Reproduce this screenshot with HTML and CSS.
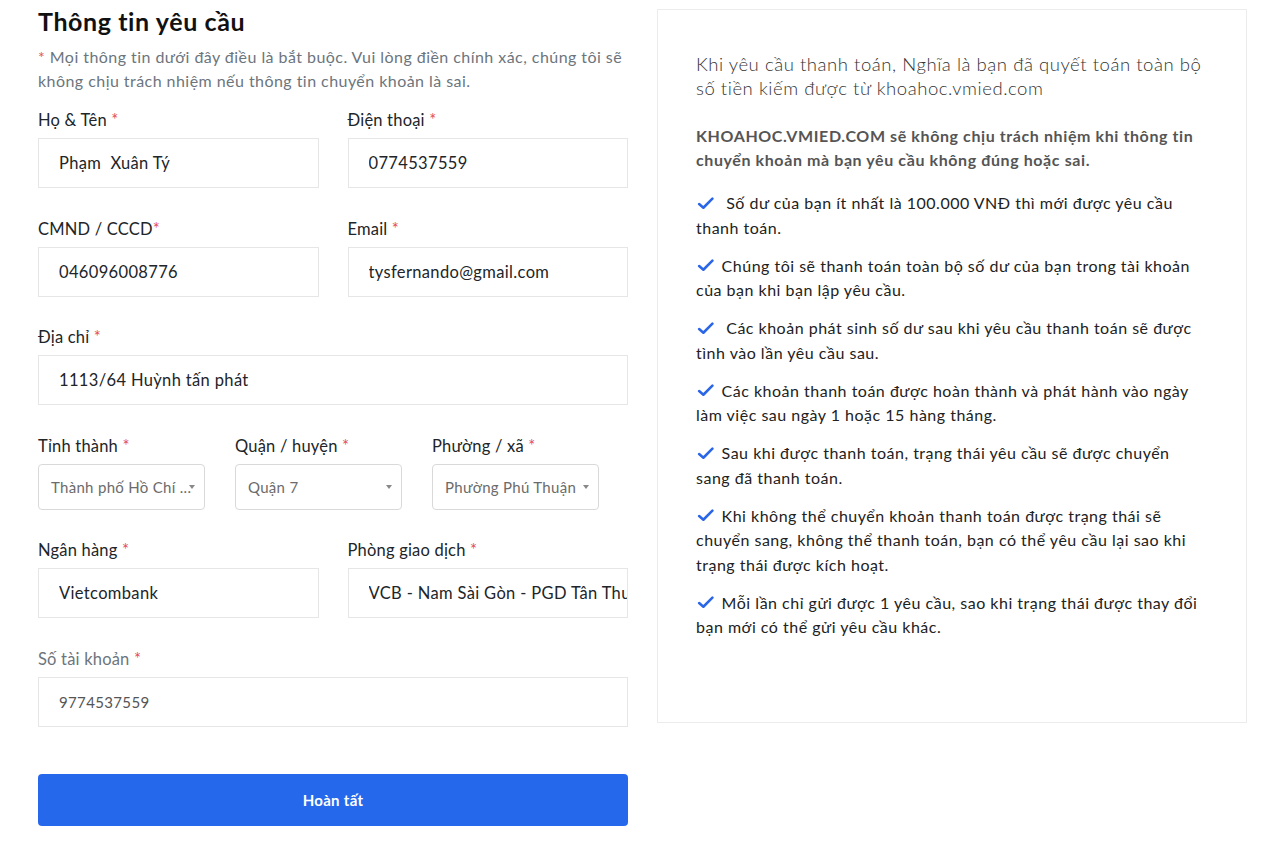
FILE: index.html
```html
<!DOCTYPE html>
<html lang="vi">

<head>
    <meta charset="UTF-8">
    <title>Thông tin yêu cầu</title>
    <link rel="stylesheet" href="styles.css">
</head>

<body>
    <div class="page">

        <form class="request-form">
            <h2 class="title">Thông tin yêu cầu</h2>
            <p class="note"><span class="req">*</span> Mọi thông tin dưới đây điều là bắt buộc. Vui lòng điền chính xác, chúng tôi sẽ không chịu trách nhiệm nếu thông tin chuyển khoản là sai.</p>

            <div class="row two">
                <div class="field">
                    <label>Họ &amp; Tên <span class="req">*</span></label>
                    <input type="text" value="Phạm  Xuân Tý">
                </div>
                <div class="field">
                    <label>Điện thoại <span class="req">*</span></label>
                    <input type="text" value="0774537559">
                </div>
            </div>

            <div class="row two tight">
                <div class="field">
                    <label>CMND / CCCD<span class="req">*</span></label>
                    <input type="text" value="046096008776">
                </div>
                <div class="field">
                    <label>Email <span class="req">*</span></label>
                    <input type="text" value="tysfernando@gmail.com">
                </div>
            </div>

            <div class="field">
                <label>Địa chỉ <span class="req">*</span></label>
                <input type="text" value="1113/64 Huỳnh tấn phát">
            </div>

            <div class="row three">
                <div class="field">
                    <label>Tỉnh thành <span class="req">*</span></label>
                    <div class="select">Thành phố Hồ Chí ...</div>
                </div>
                <div class="field">
                    <label>Quận / huyện <span class="req">*</span></label>
                    <div class="select">Quận 7</div>
                </div>
                <div class="field">
                    <label>Phường / xã <span class="req">*</span></label>
                    <div class="select">Phường Phú Thuận</div>
                </div>
            </div>

            <div class="row two">
                <div class="field">
                    <label>Ngân hàng <span class="req">*</span></label>
                    <input type="text" value="Vietcombank">
                </div>
                <div class="field">
                    <label>Phòng giao dịch <span class="req">*</span></label>
                    <input type="text" value="VCB - Nam Sài Gòn - PGD Tân Thuận">
                </div>
            </div>

            <div class="field">
                <label class="muted">Số tài khoản <span class="req">*</span></label>
                <input type="text" class="readonly" value="9774537559" readonly>
            </div>

            <button type="button" class="submit">Hoàn tất</button>
        </form>

        <div class="info">
            <p class="lead">Khi yêu cầu thanh toán, Nghĩa là bạn đã quyết toán toàn bộ số tiền kiếm được từ khoahoc.vmied.com</p>
            <p class="warn">KHOAHOC.VMIED.COM sẽ không chịu trách nhiệm khi thông tin chuyển khoản mà bạn yêu cầu không đúng hoặc sai.</p>
            <ul class="rules">
                <li><svg class="tick" viewBox="0 0 16 12"><path d="M2 6.5 L6 10 L14.5 1.5"/></svg> &nbsp;Số dư của bạn ít nhất là 100.000 VNĐ thì mới được yêu cầu thanh toán.</li>
                <li><svg class="tick" viewBox="0 0 16 12"><path d="M2 6.5 L6 10 L14.5 1.5"/></svg> Chúng tôi sẽ thanh toán toàn bộ số dư của bạn trong tài khoản của bạn khi bạn lập yêu cầu.</li>
                <li><svg class="tick" viewBox="0 0 16 12"><path d="M2 6.5 L6 10 L14.5 1.5"/></svg> &nbsp;Các khoản phát sinh số dư sau khi yêu cầu thanh toán sẽ được tình vào lần yêu cầu sau.</li>
                <li><svg class="tick" viewBox="0 0 16 12"><path d="M2 6.5 L6 10 L14.5 1.5"/></svg> Các khoản thanh toán được hoàn thành và phát hành vào ngày làm việc sau ngày 1 hoặc 15 hàng tháng.</li>
                <li><svg class="tick" viewBox="0 0 16 12"><path d="M2 6.5 L6 10 L14.5 1.5"/></svg> Sau khi được thanh toán, trạng thái yêu cầu sẽ được chuyển sang đã thanh toán.</li>
                <li><svg class="tick" viewBox="0 0 16 12"><path d="M2 6.5 L6 10 L14.5 1.5"/></svg> Khi không thể chuyển khoản thanh toán được trạng thái sẽ chuyển sang, không thể thanh toán, bạn có thể yêu cầu lại sao khi trạng thái được kích hoạt.</li>
                <li><svg class="tick" viewBox="0 0 16 12"><path d="M2 6.5 L6 10 L14.5 1.5"/></svg> Mỗi lần chỉ gửi được 1 yêu cầu, sao khi trạng thái được thay đổi bạn mới có thể gửi yêu cầu khác.</li>
            </ul>
        </div>

    </div>
</body>

</html>
```

FILE: styles.css
```css
body {
    margin: 0;
    background-color: white;
    font-family: Lato, "Noto Sans", sans-serif;
    color: #212529;
}

.page {
    display: flex;
    gap: 29px;
    padding: 9px 18px 0 38px;
    align-items: flex-start;
}

.request-form {
    width: 590px;
    flex-shrink: 0;
}

.title {
    margin: 0 0 12px;
    font-size: 25px;
    font-weight: 700;
    line-height: 24px;
    letter-spacing: 0.6px;
    color: #111;
}

.note {
    margin: 0 0 15px;
    font-size: 16px;
    line-height: 24px;
    letter-spacing: 0.45px;
    color: #6c757d;
}

.req {
    color: #e4505e;
}

.row {
    display: grid;
    column-gap: 29px;
}

.two {
    grid-template-columns: 1fr 1fr;
}

.three {
    grid-template-columns: repeat(3, 167px);
    column-gap: 30px;
}

.field {
    margin-bottom: 29px;
}

.three .field {
    margin-bottom: 28px;
}

.tight .field {
    margin-bottom: 28px;
}

label {
    display: block;
    font-size: 16.5px;
    line-height: 24px;
    letter-spacing: 0.2px;
    margin-bottom: 6px;
}

label.muted {
    color: #6c757d;
}

input {
    display: block;
    box-sizing: border-box;
    width: 100%;
    height: 50px;
    padding: 0 0 0 20px;
    border: 1px solid #e6e6e6;
    border-radius: 0;
    font-family: inherit;
    font-size: 16.5px;
    letter-spacing: 0.35px;
    color: #212529;
    outline: none;
}

input.readonly {
    font-size: 15px;
    color: #555;
}

.select {
    position: relative;
    box-sizing: border-box;
    height: 46px;
    padding: 0 28px 0 12px;
    border: 1px solid #d9d9d9;
    border-radius: 4px;
    font-size: 15px;
    line-height: 44px;
    letter-spacing: 0.3px;
    color: #6b6b6b;
    white-space: nowrap;
    overflow: hidden;
}

.select::after {
    content: "";
    position: absolute;
    right: 9px;
    top: 20px;
    border-left: 3px solid transparent;
    border-right: 3px solid transparent;
    border-top: 4px solid #888;
}

.submit {
    display: block;
    width: 100%;
    height: 52px;
    margin-top: 47px;
    border: none;
    border-radius: 4px;
    background-color: #2568eb;
    color: white;
    font-family: inherit;
    font-size: 15px;
    font-weight: 700;
    letter-spacing: 0.3px;
}

.info {
    box-sizing: border-box;
    width: 590px;
    height: 714px;
    padding: 42px 38px 0;
    border: 1px solid #ececec;
}

.lead {
    margin: 0 0 24px;
    font-size: 18.5px;
    font-weight: 300;
    line-height: 24px;
    letter-spacing: 0.55px;
    color: #333;
}

.warn {
    margin: 0 0 19px;
    font-size: 16px;
    font-weight: 700;
    line-height: 24px;
    letter-spacing: 0.6px;
    color: #555;
}

.rules {
    list-style: none;
    margin: 0;
    padding: 0;
}

.rules li {
    font-size: 16px;
    line-height: 24.5px;
    letter-spacing: 0.5px;
    margin-bottom: 13.5px;
    color: #222;
}

.tick {
    width: 17px;
    height: 13px;
    margin: 0 3px 3px 1px;
    vertical-align: middle;
    fill: none;
    stroke: #2a66e6;
    stroke-width: 2.4;
    stroke-linecap: round;
    stroke-linejoin: round;
}
```
